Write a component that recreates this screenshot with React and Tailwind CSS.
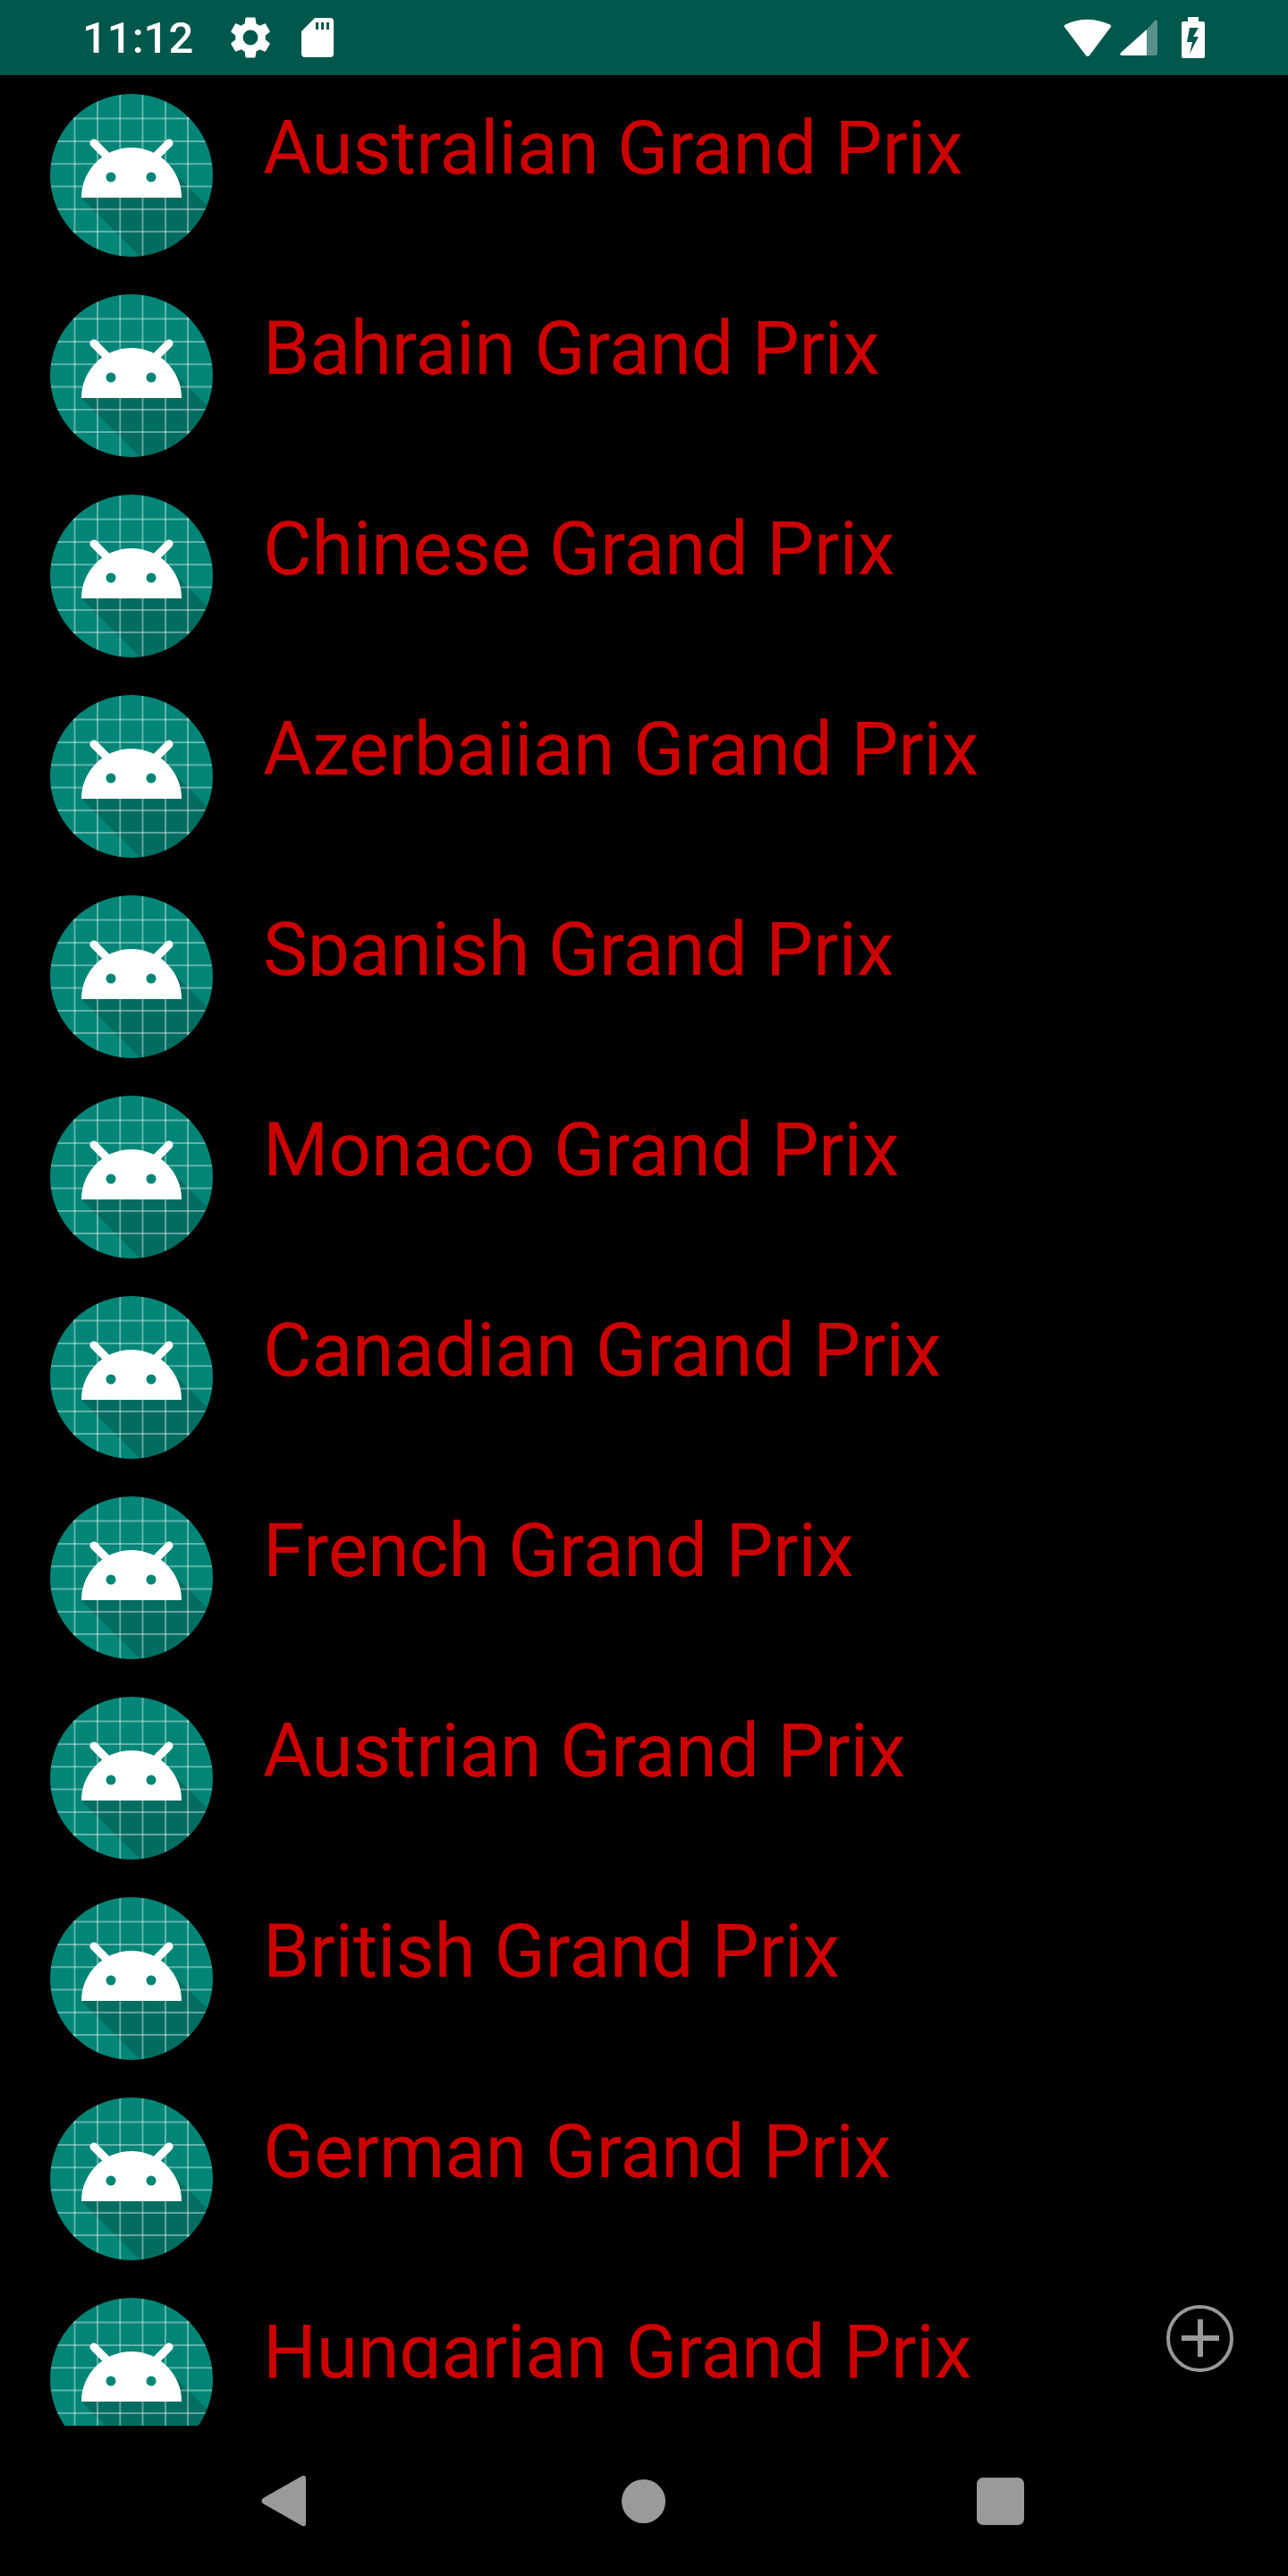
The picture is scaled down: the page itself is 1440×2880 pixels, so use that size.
import React from 'react';

const races = [
  'Australian Grand Prix',
  'Bahrain Grand Prix',
  'Chinese Grand Prix',
  'Azerbaijan Grand Prix',
  'Spanish Grand Prix',
  'Monaco Grand Prix',
  'Canadian Grand Prix',
  'French Grand Prix',
  'Austrian Grand Prix',
  'British Grand Prix',
  'German Grand Prix',
  'Hungarian Grand Prix',
];

const gridLines = [27.5, 53, 78.3, 103.5, 129, 154];

const AndroidIcon = ({ id }) => (
  <svg width="182" height="182" viewBox="0 0 182 182" className="shrink-0">
    <defs>
      <clipPath id={id}>
        <circle cx="91" cy="91" r="91" />
      </clipPath>
    </defs>
    <g clipPath={`url(#${id})`}>
      <rect width="182" height="182" fill="#008577" />
      <path d="M35 116 L141 90 L182 131 L182 182 L101 182 Z" fill="#000000" fillOpacity="0.18" />
      {gridLines.map((p) => (
        <g key={p} stroke="#ffffff" strokeOpacity="0.38" strokeWidth="2">
          <line x1={p} y1="0" x2={p} y2="182" />
          <line x1="0" y1={p} x2="182" y2={p} />
        </g>
      ))}
    </g>
    <path d="M49 55 L70 76 M133 55 L112 76" stroke="#ffffff" strokeWidth="9" strokeLinecap="round" />
    <path d="M35 116 A56 56 0 0 1 147 116 Z" fill="#ffffff" />
    <circle cx="68" cy="93" r="5.5" fill="#008577" />
    <circle cx="113" cy="93" r="5.5" fill="#008577" />
  </svg>
);

const RaceRow = ({ name, index }) => (
  <div className="flex h-[224px] shrink-0 pl-[56px] pt-[21px]">
    <AndroidIcon id={`icon-clip-${index}`} />
    <p className="ml-[56px] mt-[-21px] h-[111px] overflow-hidden pt-[33px] text-[84px] leading-[98px] tracking-[-0.15px] text-[#cc0000]">
      {name}
    </p>
  </div>
);

const StatusBar = () => (
  <div className="flex h-[84px] shrink-0 items-center bg-[#00574b] text-white">
    <span className="ml-[92px] text-[49px] font-medium leading-none">11:12</span>
    <svg width="56" height="56" viewBox="0 0 24 24" fill="#ffffff" className="ml-[36px]">
      <path d="M19.14 12.94c.04-.3.06-.61.06-.94 0-.32-.02-.64-.07-.94l2.03-1.58a.49.49 0 0 0 .12-.61l-1.92-3.32a.49.49 0 0 0-.59-.22l-2.39.96c-.5-.38-1.03-.7-1.62-.94l-.36-2.54a.48.48 0 0 0-.48-.41h-3.84c-.24 0-.43.17-.47.41l-.36 2.54c-.59.24-1.13.57-1.62.94l-2.39-.96a.49.49 0 0 0-.59.22L2.74 8.87c-.12.21-.08.47.12.61l2.03 1.58c-.05.3-.09.63-.09.94s.02.64.07.94l-2.03 1.58a.49.49 0 0 0-.12.61l1.92 3.32c.12.22.37.29.59.22l2.39-.96c.5.38 1.03.7 1.62.94l.36 2.54c.05.24.24.41.48.41h3.84c.24 0 .44-.17.47-.41l.36-2.54c.59-.24 1.13-.56 1.62-.94l2.39.96c.22.08.47 0 .59-.22l1.92-3.32c.12-.22.07-.47-.12-.61l-2.01-1.58zM12 15.6A3.6 3.6 0 1 1 12 8.4a3.6 3.6 0 0 1 0 7.2z" />
    </svg>
    <svg width="36" height="44" viewBox="0 0 36 44" className="ml-[29px]">
      <path fillRule="evenodd" fill="#ffffff" d="M15 0 H32 a4 4 0 0 1 4 4 V40 a4 4 0 0 1 -4 4 H4 a4 4 0 0 1 -4 -4 V15 Z M16 5 V13 H19 V5 Z M22 5 V13 H25 V5 Z M28 5 V13 H31 V5 Z" />
    </svg>
    <svg width="54" height="44" viewBox="0 0 54 44" className="ml-auto">
      <path fill="#ffffff" d="M1 10 Q0 9 2 7.5 Q26 -4 52 7.5 Q54 9 53 10 L29 42 Q27 44 25 42 Z" />
    </svg>
    <svg width="42" height="42" viewBox="0 0 42 42" className="ml-[9px]">
      <path fill="#ffffff" d="M30 12 L1 38 Q-1 41 3 41 H30 Z" />
      <path fill="#ffffff" fillOpacity="0.35" d="M30 12 L39 2 Q42 0 42 3 V38 Q42 41 39 41 H30 Z" />
    </svg>
    <svg width="26" height="46" viewBox="0 0 26 46" className="ml-[27px] mr-[93px]">
      <path
        fillRule="evenodd"
        fill="#ffffff"
        d="M7 0 H19 V5 H24 a2 2 0 0 1 2 2 V44 a2 2 0 0 1 -2 2 H2 a2 2 0 0 1 -2 -2 V7 a2 2 0 0 1 2 -2 H7 Z M9 12 L6 28 H12 L9 41 L19 22 H13 L19 12 Z"
      />
    </svg>
  </div>
);

const NavBar = () => (
  <div className="flex h-[168px] shrink-0 items-center bg-black">
    <svg width="50" height="58" viewBox="0 0 50 58" className="ml-[292px]">
      <path fill="#9a9a9a" d="M46 1 Q50 0 50 4 V54 Q50 58 46 57 L2 32 Q-1 29 2 26 Z" />
    </svg>
    <span className="ml-[353px] h-[49px] w-[49px] rounded-full bg-[#9a9a9a]" />
    <span className="ml-[348px] h-[53px] w-[53px] rounded-[7px] bg-[#9a9a9a]" />
  </div>
);

const AddButton = () => (
  <button className="absolute left-[1304px] top-[2577px] h-[75px] w-[75px] rounded-full border-[4px] border-[#999999]">
    <span className="absolute left-[13px] top-[30px] h-[6px] w-[42px] bg-[#999999]" />
    <span className="absolute left-[31px] top-[12px] h-[42px] w-[6px] bg-[#999999]" />
  </button>
);

const App = () => (
  <div className="relative flex h-[2880px] w-[1440px] flex-col overflow-hidden bg-black font-['Roboto',sans-serif]">
    <StatusBar />
    <div className="flex flex-1 flex-col overflow-hidden">
      {races.map((name, i) => (
        <RaceRow key={name} name={name} index={i} />
      ))}
    </div>
    <NavBar />
    <AddButton />
  </div>
);

export default App;
